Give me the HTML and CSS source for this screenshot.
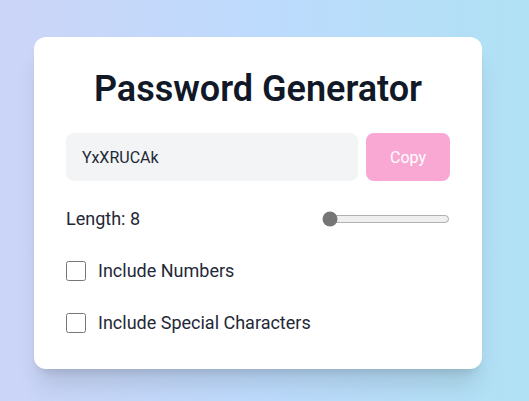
FILE: index.html
```html
<!DOCTYPE html>
<html lang="en">
<head>
<meta charset="utf-8">
<title>Password Generator</title>
<link rel="stylesheet" href="styles.css">
</head>
<body>
<main class="page">
  <section class="card">
    <h1 class="title">Password Generator</h1>
    <div class="output-row">
      <input class="output" type="text" value="YxXRUCAk" readonly>
      <button class="copy" type="button">Copy</button>
    </div>
    <div class="row length-row">
      <label class="label" for="len">Length: 8</label>
      <input id="len" class="range" type="range" min="8" max="32" value="8">
    </div>
    <label class="row check-row">
      <input class="check" type="checkbox">
      <span class="label">Include Numbers</span>
    </label>
    <label class="row check-row">
      <input class="check" type="checkbox">
      <span class="label">Include Special Characters</span>
    </label>
  </section>
</main>
</body>
</html>
```
FILE: styles.css
```css
* { box-sizing: border-box; }
html, body { margin: 0; padding: 0; }
body {
  font-family: Roboto, "Noto Sans", sans-serif;
  color: #1f2937;
}
.page {
  min-height: 401px;
  display: flex;
  align-items: center;
  justify-content: center;
  padding: 5px 13px 0 0;
  background: linear-gradient(to right, #ccd5f7, #bddbfd 50%, #b0e1f4);
}
.card {
  width: 448px;
  background: #fff;
  border-radius: 12px;
  padding: 32px;
  box-shadow: 0 20px 25px -5px rgba(0,0,0,0.12), 0 8px 10px -6px rgba(0,0,0,0.12);
}
.title {
  margin: 0 0 24px;
  text-align: center;
  font-size: 36px;
  line-height: 40px;
  font-weight: 600;
  color: #111827;
}
.output-row {
  display: flex;
  gap: 8px;
  margin-bottom: 24px;
}
.output {
  flex: 1;
  min-width: 0;
  height: 48px;
  border: none;
  border-radius: 8px;
  background: #f3f4f6;
  padding: 0 16px;
  font: inherit;
  font-size: 16px;
  color: #1f2937;
  outline: none;
}
.copy {
  width: 84px;
  height: 48px;
  border: none;
  border-radius: 8px;
  background: #f9a8d4;
  color: #fff;
  font: inherit;
  font-size: 16px;
}
.row {
  display: flex;
  align-items: center;
  height: 28px;
  margin-bottom: 24px;
}
.row:last-child { margin-bottom: 0; }
.length-row { justify-content: space-between; }
.label {
  font-size: 18px;
  line-height: 28px;
  color: #1f2937;
}
.range { width: 128px; margin: 0; accent-color: #767676; }
.check-row { gap: 12px; }
.check {
  width: 20px;
  height: 20px;
  margin: 0;
}
```
